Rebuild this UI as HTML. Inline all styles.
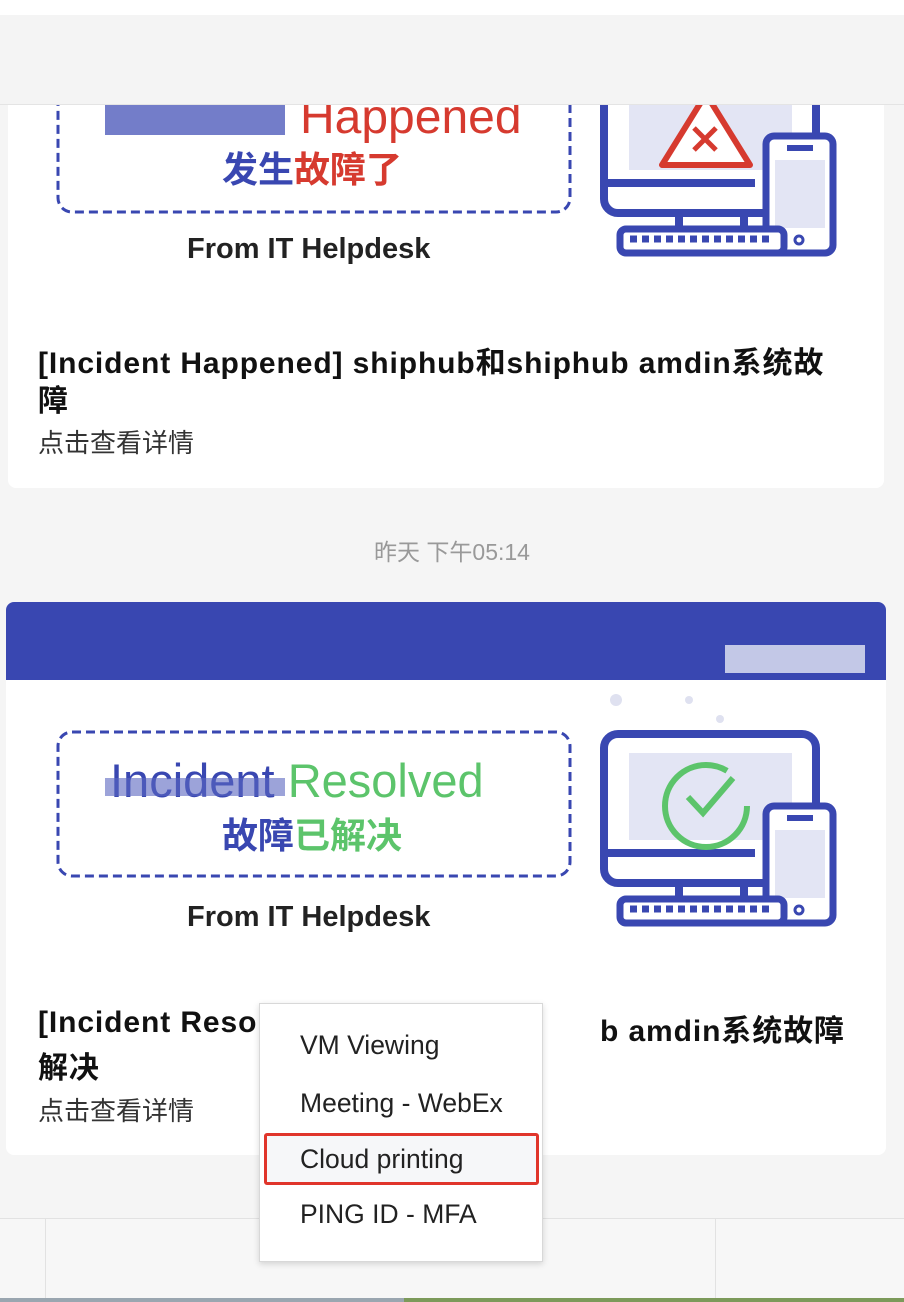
<!DOCTYPE html>
<html><head><meta charset="utf-8"><style>
*{margin:0;padding:0;box-sizing:border-box}
body{width:904px;height:1302px;background:#f5f5f5;position:relative;overflow:hidden;font-family:"Liberation Sans","Noto Sans CJK SC",sans-serif}
.abs{position:absolute}
.card{position:absolute;background:#fff;border-radius:8px}
.t{position:absolute;font-size:30px;letter-spacing:.9px;font-weight:bold;color:#111;white-space:nowrap}
.s{position:absolute;font-size:26px;color:#333}
.mi{position:absolute;left:300px;font-size:26.5px;color:#222;white-space:nowrap}
</style></head><body>
<div class="card" style="left:8px;top:60px;width:876px;height:428px"></div>
<div class="card" style="left:6px;top:602px;width:880px;height:553px;overflow:hidden">
<div style="height:78px;background:#3947b1"></div></div>
<svg class="abs" style="left:0;top:0" width="904" height="1302">
<defs>
<g id="mon">
<rect x="604" y="734" width="212" height="149" rx="14" fill="#fff" stroke="#3947b1" stroke-width="8"/>
<rect x="629" y="753" width="163" height="87" fill="#e3e5f4"/>
<line x1="606" y1="853" x2="755" y2="853" stroke="#3947b1" stroke-width="8"/>
<rect x="675" y="883" width="8" height="14" fill="#3947b1"/><rect x="740" y="883" width="8" height="14" fill="#3947b1"/>
<rect x="766" y="806" width="67" height="117" rx="8" fill="#fff" stroke="#3947b1" stroke-width="7"/>
<rect x="775" y="830" width="50" height="68" fill="#e3e5f4"/>
<rect x="787" y="815" width="26" height="6" fill="#3947b1"/>
<circle cx="799" cy="910" r="4" fill="none" stroke="#3947b1" stroke-width="3"/>
<rect x="620" y="899" width="164" height="24" rx="6" fill="#fff" stroke="#3947b1" stroke-width="7"/>
<path d="M630 909h142" stroke="#3947b1" stroke-width="7" stroke-dasharray="7 5"/>
</g>
</defs>
<g transform="translate(0,-670)"><use href="#mon"/></g>
<path d="M706 94 L662 165 L750 165 Z" fill="#fff" stroke="#d63a2f" stroke-width="6" stroke-linejoin="round"/>
<path d="M694 128l22 22M716 128l-22 22" stroke="#d63a2f" stroke-width="5"/>
<rect x="58" y="50" width="512" height="162" rx="14" fill="none" stroke="#3947b1" stroke-width="3" stroke-dasharray="9 5"/>
<text x="300" y="133" font-family="Liberation Sans" font-size="48" fill="#d63a2f">Happened</text>
<rect x="105" y="100" width="180" height="35" fill="#5a66c0" opacity=".85"/>
<text x="222" y="182" font-family="Noto Sans CJK SC" font-weight="bold" font-size="36" fill="#3947b1">发生<tspan fill="#d63a2f">故障了</tspan></text>
<text x="187" y="258" font-family="Liberation Sans" font-weight="bold" font-size="29" fill="#222">From IT Helpdesk</text>
<use href="#mon"/>
<circle cx="706" cy="806" r="41" fill="none" stroke="#5cc46b" stroke-width="6" stroke-dasharray="215 43"/>
<path d="M688 797l15 16 30-35" fill="none" stroke="#5cc46b" stroke-width="6"/>
<circle cx="616" cy="700" r="6" fill="#dfe1f0"/><circle cx="689" cy="700" r="4" fill="#dfe1f0"/><circle cx="720" cy="719" r="4" fill="#dfe1f0"/>
<rect x="58" y="732" width="512" height="144" rx="14" fill="none" stroke="#3947b1" stroke-width="3" stroke-dasharray="9 5"/>
<text x="110" y="797" font-family="Liberation Sans" font-size="47" fill="#3947b1">Incident <tspan fill="#5cc46b">Resolved</tspan></text>
<rect x="105" y="778" width="180" height="18" fill="#5a66c0" opacity=".6"/>
<text x="222" y="848" font-family="Noto Sans CJK SC" font-weight="bold" font-size="36" fill="#3947b1">故障<tspan fill="#5cc46b">已解决</tspan></text>
<text x="187" y="926" font-family="Liberation Sans" font-weight="bold" font-size="29" fill="#222">From IT Helpdesk</text>
<rect x="725" y="645" width="140" height="28" fill="#e6e8f5" opacity=".8"/>
</svg>
<div class="abs" style="left:0;top:0;width:904px;height:15px;background:#fff"></div>
<div class="abs" style="left:0;top:15px;width:904px;height:90px;background:#f4f4f4;border-bottom:1px solid #e4e4e4"></div>
<div class="t" style="left:38px;top:338px">[Incident Happened] shiphub和shiphub amdin系统故</div>
<div class="t" style="left:38px;top:376px">障</div>
<div class="s" style="left:38px;top:423px">点击查看详情</div>
<div class="abs" style="left:0;width:904px;top:533px;text-align:center;font-size:23px;color:#999">昨天 下午05:14</div>
<div class="t" style="left:38px;top:1006px">[Incident Resol</div>
<div class="t" style="left:600px;top:1006px">b amdin系统故障</div>
<div class="t" style="left:38px;top:1043px">解决</div>
<div class="s" style="left:38px;top:1091px">点击查看详情</div>
<div class="abs" style="left:0;top:1218px;width:904px;height:84px;background:#f7f7f7;border-top:1px solid #e2e2e2"></div>
<div class="abs" style="left:45px;top:1218px;width:1px;height:80px;background:#e2e2e2"></div>
<div class="abs" style="left:715px;top:1218px;width:1px;height:80px;background:#e2e2e2"></div>
<div class="abs" style="left:0;top:1298px;width:404px;height:4px;background:#9aa6b0"></div>
<div class="abs" style="left:404px;top:1298px;width:500px;height:4px;background:#7c9a5a"></div>
<div class="abs" style="left:259px;top:1003px;width:284px;height:259px;background:#fff;border:1px solid #d8d8d8;box-shadow:0 2px 6px rgba(0,0,0,.15)"></div>
<div class="mi" style="top:1030px">VM Viewing</div>
<div class="mi" style="top:1088px">Meeting - WebEx</div>
<div class="abs" style="left:264px;top:1133px;width:275px;height:52px;border:3px solid #e0352b;border-radius:3px;background:#f6f7f9"></div>
<div class="mi" style="top:1144px">Cloud printing</div>
<div class="mi" style="top:1199px">PING ID - MFA</div>
</body></html>
